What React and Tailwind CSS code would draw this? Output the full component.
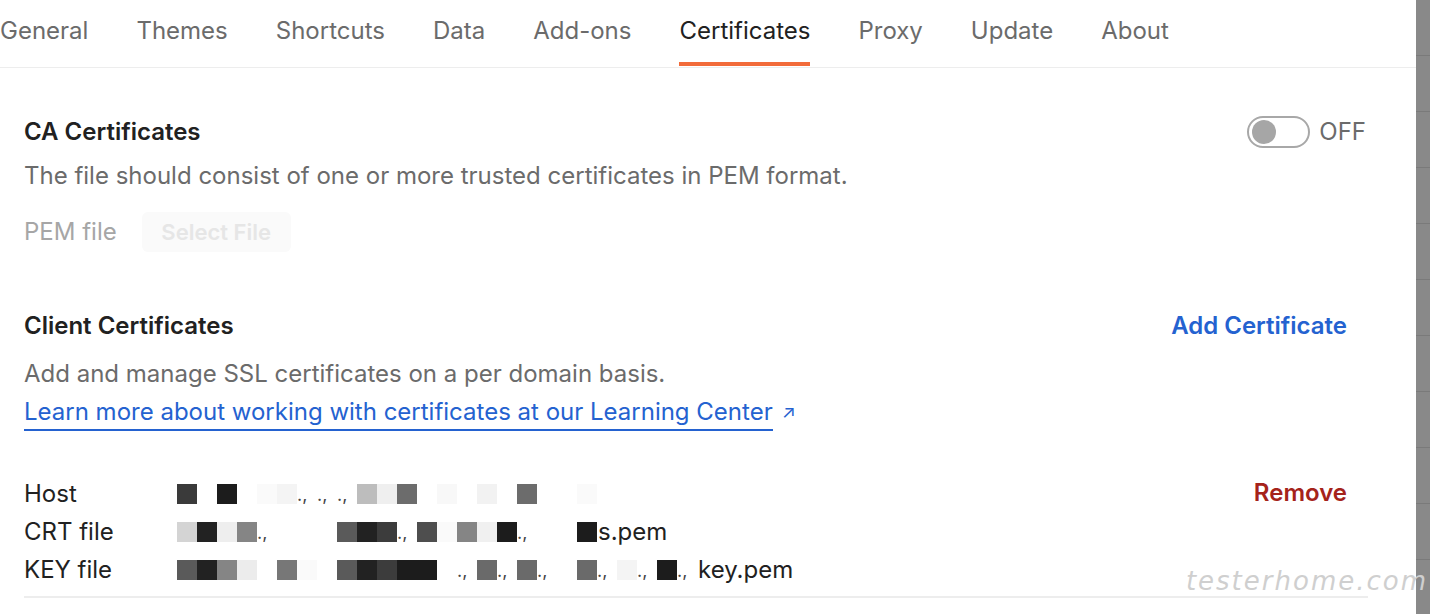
import React from 'react';

const tabs = ['General', 'Themes', 'Shortcuts', 'Data', 'Add-ons', 'Certificates', 'Proxy', 'Update', 'About'];

// mosaic cells of the redacted values, 20px each from x=177
const hostCells = ['#3a3a3a', '', '#1c1c1c', '', '#fafafa', '#f4f4f4', 't', 't', 't', '#bdbdbd', '#efefef', '#6c6c6c', '', '#f8f8f8', '', '#f2f2f2', '', '#6c6c6c', '', '', '#fafafa'];
const crtCells = ['#d4d4d4', '#222222', '#eeeeee', '#858585', 't', '', '', '', '#5a5a5a', '#222222', '#3c3c3c', 't', '#4e4e4e', '#fafafa', '#858585', '#f0f0f0', '#1c1c1c', 't', '', '', '#1c1c1c'];
const keyCells = ['#5a5a5a', '#222222', '#858585', '#ececec', '', '#777777', '#fafafa', '', '#5a5a5a', '#222222', '#3c3c3c', '#1c1c1c', '#1c1c1c', '', 't', '#6a6a6a', 't', '#6a6a6a', 't', '', '#6a6a6a', 't', '#f4f4f4', 't', '#1c1c1c', 't'];

const Mosaic = ({ cells, tail }) => (
  <div className="flex items-center">
    {cells.map((c, i) =>
      c === 't' ? (
        <div key={i} className="w-[20px] h-[20px] overflow-hidden text-[18px] leading-[22px] text-[#444]">.,</div>
      ) : (
        <div key={i} className="w-[20px] h-[20px]" style={{ backgroundColor: c || 'transparent' }} />
      )
    )}
    {tail && <span className="ml-[1px] text-[#212121]">{tail}</span>}
  </div>
);

const Row = ({ label, cells, tail, action }) => (
  <div className="flex items-center h-[38px]">
    <div className="w-[153px] text-[#212121]">{label}</div>
    <div className="flex-1">
      <Mosaic cells={cells} tail={tail} />
    </div>
    {action}
  </div>
);

export default function App() {
  return (
    <div className="relative flex w-[1430px] h-[614px] overflow-hidden bg-white" style={{ fontFamily: 'Inter, "Noto Sans", sans-serif' }}>
      <div className="flex-1 flex flex-col text-[24px] leading-[30px]">
        {/* tab bar */}
        <div className="flex h-[68px] border-b border-[#ededed] gap-[48px]">
          {tabs.map((t) => (
            <div key={t} className={`relative flex items-start pt-[16px] ${t === 'Certificates' ? 'text-[#212121]' : 'text-[#6b6b6b]'}`}>
              {t}
              {t === 'Certificates' && <div className="absolute left-0 right-0 bottom-[1px] h-[4px] bg-[#f26b3a]" />}
            </div>
          ))}
        </div>

        <div className="flex flex-col pl-[24px] pr-[48px]">
          {/* CA certificates */}
          <div className="flex items-center justify-between mt-[48px]">
            <div className="font-semibold text-[#212121]">CA Certificates</div>
            <div className="flex items-center gap-[9px] mr-[2px]">
              <div className="w-[63px] h-[32px] rounded-full border-2 border-[#a8a8a8] flex items-center px-[3px]">
                <div className="w-[24px] h-[24px] rounded-full bg-[#a6a6a6]" />
              </div>
              <span className="text-[#6b6b6b]">OFF</span>
            </div>
          </div>
          <div className="mt-[13px] text-[#6b6b6b]">The file should consist of one or more trusted certificates in PEM format.</div>
          <div className="flex items-center gap-[25px] mt-[21px] h-[40px]">
            <span className="text-[#a6a6a6]">PEM file</span>
            <div className="h-[40px] w-[149px] rounded-md bg-[#fafafa] flex items-center justify-center font-semibold text-[#e6e6e6] text-[22px]">Select File</div>
          </div>

          {/* Client certificates */}
          <div className="flex items-center justify-between mt-[59px]">
            <div className="font-semibold text-[#212121]">Client Certificates</div>
            <div className="font-semibold text-[#2462d0] mr-[21px]">Add Certificate</div>
          </div>
          <div className="mt-[18px] text-[#6b6b6b]">Add and manage SSL certificates on a per domain basis.</div>
          <div className="mt-[8px] flex items-start">
            <span className="text-[#2462d0] border-b-2 border-[#2462d0] pb-[2px]">Learn more about working with certificates at our Learning Center</span>
            <span className="text-[#2462d0] ml-[9px] text-[18px] leading-[30px]">↗</span>
          </div>

          <div className="mt-[44px] flex flex-col pb-[7px] border-b-2 border-[#ededed]">
            <Row
              label="Host"
              cells={hostCells}
              action={<div className="font-semibold text-[#a5231a] mr-[21px] -mt-[2px]">Remove</div>}
            />
            <Row label="CRT file" cells={crtCells} tail="s.pem" />
            <Row label="KEY file" cells={keyCells} tail="key.pem" />
          </div>
        </div>
      </div>

      {/* scrollbar strip */}
      <div className="w-[14px] h-full bg-[#898989] flex flex-col">
        {Array.from({ length: 11 }).map((_, i) => (
          <div key={i} className={`h-[56px] shrink-0 border-b border-[#7a7a7a] ${i === 0 ? 'h-[33px]' : ''}`} />
        ))}
      </div>

      {/* watermark */}
      <div className="absolute right-[2px] top-[562px] text-[26px] italic font-light tracking-[2px] text-[#cfcfcf]" style={{ fontFamily: '"DejaVu Sans", sans-serif' }}>
        testerhome.com
      </div>
    </div>
  );
}
